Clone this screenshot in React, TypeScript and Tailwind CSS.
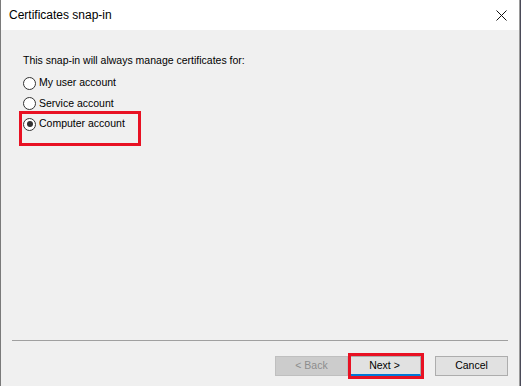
import { useState } from "react";

const options = ["My user account", "Service account", "Computer account"];

function Radio({ checked }: { checked: boolean }) {
  return (
    <span className="flex h-[13px] w-[13px] shrink-0 items-center justify-center rounded-full border border-[#333333] bg-white">
      {checked && <span className="h-[6px] w-[6px] rounded-full bg-[#333333]" />}
    </span>
  );
}

export default function App() {
  const [selected, setSelected] = useState(2);

  return (
    <div className="flex h-[386px] w-[521px] overflow-hidden bg-[#f0f0f0] font-['Liberation_Sans',Arial,sans-serif] text-black">
      <div className="flex w-[519px] flex-col border-l border-[#7a7a7a]">
        {/* title bar */}
        <div className="flex h-[30px] items-center justify-between bg-white pl-[8px] pr-[12px]">
          <span className="text-[12px] leading-none">Certificates snap-in</span>
          <svg width="11" height="11" viewBox="0 0 11 11" className="text-[#111]">
            <path d="M0.5 0.5 L10.5 10.5 M10.5 0.5 L0.5 10.5" stroke="currentColor" strokeWidth="1" />
          </svg>
        </div>

        {/* body */}
        <div className="relative flex-1 pl-[22px] pt-[24px]">
          <p className="text-[10.5px] leading-[12px]">This snap-in will always manage certificates for:</p>
          <div className="mt-[7px] flex flex-col">
            {options.map((label, i) => (
              <label
                key={label}
                onClick={() => setSelected(i)}
                className="flex h-[20.5px] cursor-default items-center gap-[3px] text-[10.5px]"
              >
                <Radio checked={selected === i} />
                <span>{label}</span>
              </label>
            ))}
          </div>
          {/* annotation box */}
          <div className="absolute left-[18px] top-[81px] h-[35px] w-[122px] border-[3px] border-[#e81123]" />
        </div>

        {/* footer */}
        <div className="flex h-[46px] flex-col px-[11px] pl-[11px]">
          <div className="h-px bg-[#a0a0a0]" />
          <div className="relative mt-[15px] flex justify-end text-[10.5px]">
            <button
              type="button"
              disabled
              className="h-[20px] w-[73px] border border-[#bfbfbf] bg-[#cccccc] text-[#8c8c8c]"
            >
              &lt; Back
            </button>
            <button
              type="button"
              className="h-[20px] w-[73px] border border-[#adadad] border-b-2 border-b-[#0078d7] bg-[#e1e1e1]"
            >
              Next &gt;
            </button>
            <button
              type="button"
              className="ml-[14px] h-[20px] w-[73px] border border-[#adadad] bg-[#e1e1e1]"
            >
              Cancel
            </button>
            <div className="pointer-events-none absolute right-[84px] top-[-3px] h-[26px] w-[76px] border-[3px] border-[#e81123]" />
          </div>
        </div>
      </div>
      <div className="w-px bg-[#9a9a9a]" />
      <div className="w-px bg-[#4a4a58]" />
    </div>
  );
}
